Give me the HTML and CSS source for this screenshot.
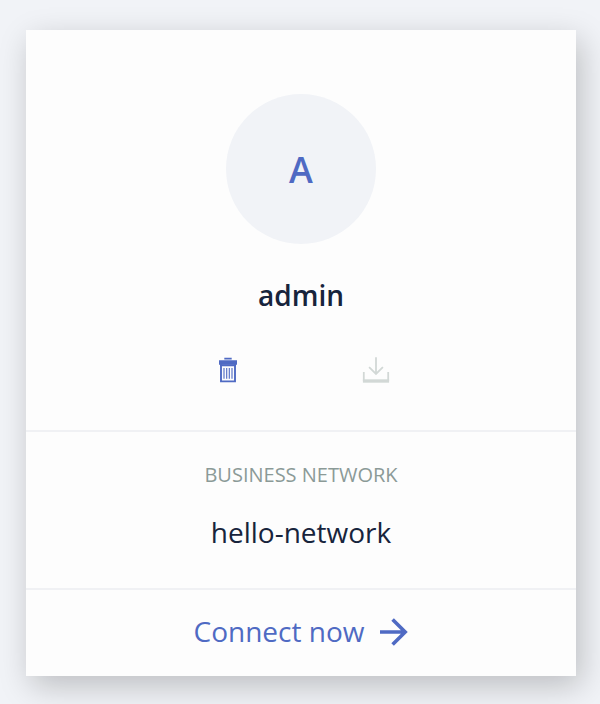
FILE: index.html
```
<!DOCTYPE html>
<html lang="en">
<head>
<meta charset="utf-8">
<title>Business network card</title>
<link rel="stylesheet" href="styles.css">
</head>
<body>
<article class="card">
  <section class="profile">
    <div class="avatar">A</div>
    <h1 class="name">admin</h1>
    <div class="actions">
      <svg class="icon-trash" viewBox="0 0 18 26" width="18" height="26">
        <path fill="currentColor" d="M5.3 .7h7.4v1.9H5.3zM0 3.2h18v4.6H0z"/>
        <path fill="none" stroke="currentColor" stroke-width="1.9" d="M2 7v17.4h14V7M1 8.2h16"/>
        <path fill="none" stroke="currentColor" stroke-width="1.1" d="M5 11v10.7M7.7 11v10.7M10.3 11v10.7M13 11v10.7"/>
      </svg>
      <svg class="icon-download" viewBox="0 0 28 26" width="28" height="26">
        <path fill="none" stroke="currentColor" stroke-width="1.8" d="M14 .2v17M7.1 10.1L14 17l6.9-6.9M1.8 15v9M26.2 15v9"/>
        <path fill="currentColor" d="M.9 22.3h26.2v3.4H.9z"/>
      </svg>
    </div>
  </section>
  <section class="network">
    <div class="label">BUSINESS NETWORK</div>
    <div class="value">hello-network</div>
  </section>
  <footer class="connect">
    <span>Connect now</span>
    <svg viewBox="0 0 28 28" width="28" height="28"><path fill="none" stroke="currentColor" stroke-width="3.6" d="M0 14h25M12.6 1.4L25.2 14 12.6 26.6"/></svg>
  </footer>
</article>
</body>
</html>
```
FILE: styles.css
```
* { box-sizing: border-box; }
body {
  margin: 0;
  height: 704px;
  padding: 30px 24px 28px 26px;
  overflow: hidden;
  background: #f1f3f7;
  color: #17243c;
  font-family: "Open Sans", sans-serif;
}
.card {
  height: 646px;
  display: flex;
  flex-direction: column;
  background: #fdfdfd;
  box-shadow: 5px 10px 30px rgba(0, 0, 0, .22);
}
.profile {
  height: 400px;
  padding-top: 64px;
  display: flex;
  flex-direction: column;
  align-items: center;
}
.avatar {
  width: 150px;
  height: 150px;
  border-radius: 50%;
  background: #f1f3f7;
  color: #4f6ac3;
  font-size: 36px;
  font-weight: 600;
  line-height: 151px;
  text-align: center;
}
.name {
  margin: 31px 0 0;
  font-size: 28px;
  font-weight: 600;
  line-height: 40px;
}
.actions {
  width: 171px;
  margin: 42px 0 0 7px;
  display: flex;
  justify-content: space-between;
  align-items: flex-start;
}
.icon-trash { color: #4f6ac3; }
.icon-download { color: #d2d8d6; }
.network {
  height: 158px;
  padding-top: 29px;
  border-top: 2px solid #f0f1f4;
  text-align: center;
}
.label {
  color: #8b9a97;
  font-size: 20px;
  line-height: 28px;
}
.value {
  margin-top: 23px;
  font-size: 28px;
  line-height: 40px;
}
.connect {
  height: 88px;
  padding-bottom: 2px;
  border-top: 2px solid #f0f1f4;
  display: flex;
  justify-content: center;
  align-items: center;
  gap: 16px;
  color: #4f6ac3;
  font-size: 28px;
  line-height: 40px;
}
.connect span { padding-bottom: 3px; }
```
